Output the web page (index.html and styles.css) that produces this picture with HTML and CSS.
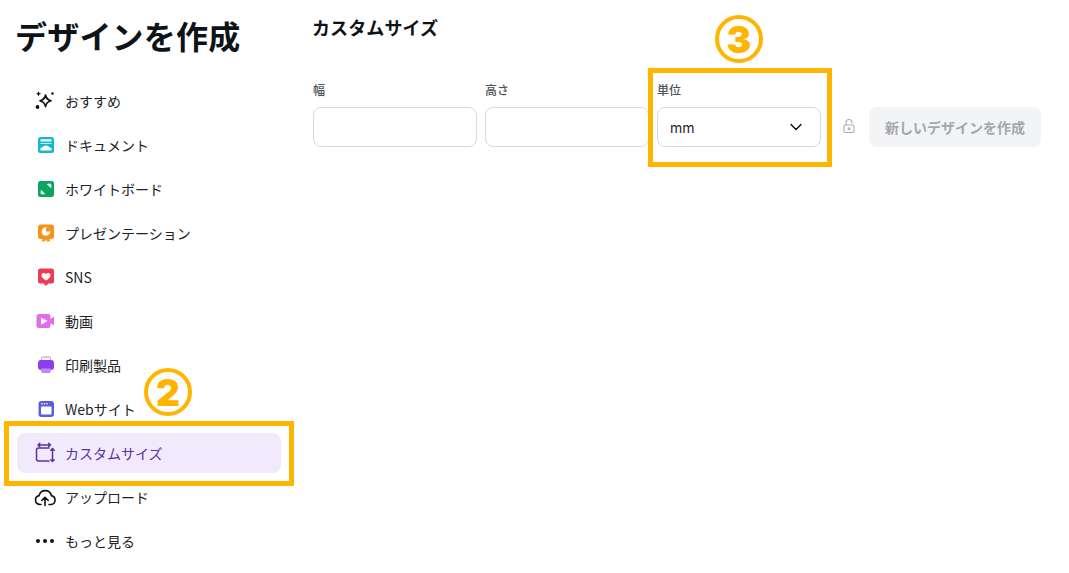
FILE: index.html
```html
<!DOCTYPE html>
<html lang="ja">
<head>
<meta charset="utf-8">
<title>デザインを作成</title>
<link rel="stylesheet" href="styles.css">
</head>
<body>
<div class="page">
  <aside class="sidebar">
    <h1 class="title">デザインを作成</h1>
    <nav class="menu">
      <a class="item"><svg class="icon" viewBox="0 0 24 24"><path d="M11.500 6c.6 3.300 2 4.900 5.500 5.800-3.500.9-4.900 2.500-5.500 5.800-.6-3.300-2-4.900-5.500-5.800 3.500-.9 4.900-2.500 5.500-5.800z" fill="none" stroke="#0e1318" stroke-width="1.700" stroke-linejoin="round"/><path d="M4.500 2l.8 2 2 .8-2 .8-.8 2-.8-2-2-.8 2-.8z" fill="#0e1318"/><circle cx="18.500" cy="4.500" r="1.300" fill="#0e1318"/><circle cx="3.500" cy="18" r="1.900" fill="#0e1318"/></svg><span>おすすめ</span></a>
      <a class="item"><svg class="icon" viewBox="0 0 24 24"><rect x="4" y="4" width="16" height="16" rx="2.500" fill="#14b8d0"/><rect x="6.500" y="6.300" width="11" height="2.200" fill="#fff"/><path d="M6.500 10h11v1h-11z" fill="#bfeef4"/><path d="M6.500 17.500v-2.500c2-.2 3-2.500 5.500-2.500s3.500 2.300 5.500 2.500v2.500z" fill="#fff"/></svg><span>ドキュメント</span></a>
      <a class="item"><svg class="icon" viewBox="0 0 24 24"><rect x="4" y="4" width="16" height="16" rx="2.500" fill="#0ba55f"/><path d="M13.500 7.200h3.300v3.300zM10.500 16.800H7.200v-3.300z" fill="#fff" stroke="#fff" stroke-width="1" stroke-linejoin="round"/></svg><span>ホワイトボード</span></a>
      <a class="item"><svg class="icon" viewBox="0 0 24 24"><path d="M9 17l-1.500 4 2.500-1 1 1 1-3zM15 17l1.500 4-2.500-1-1 1-1-3z" fill="#f7931a"/><rect x="4" y="3.500" width="16" height="14.500" rx="2.500" fill="#f7931a"/><circle cx="12" cy="10.500" r="4.300" fill="#fff"/><path d="M12 10.500V6.200a4.300 4.300 0 0 1 4.300 4.300z" fill="#f7931a"/></svg><span>プレゼンテーション</span></a>
      <a class="item"><svg class="icon" viewBox="0 0 24 24"><path d="M6.500 3.500h11A2.500 2.500 0 0 1 20 6v10a2.500 2.500 0 0 1-2.500 2.500h-3L12 21l-2.500-2.500h-3A2.500 2.500 0 0 1 4 16V6a2.500 2.500 0 0 1 2.500-2.500z" fill="#ee3a55"/><path d="M12 15.500c-3-2-4.500-3.500-4.500-5.300 0-2.500 3.200-3.200 4.500-1 1.300-2.200 4.500-1.500 4.500 1 0 1.800-1.500 3.300-4.500 5.300z" fill="#fff"/></svg><span>SNS</span></a>
      <a class="item"><svg class="icon" viewBox="0 0 24 24"><rect x="2.500" y="5" width="14" height="14" rx="2.500" fill="#e06ee8"/><path d="M15.500 10.500l4.500-3v9l-4.500-3z" fill="#e06ee8"/><path d="M7 8.500l6.500 3.600L7 15.800z" fill="#fff"/></svg><span>動画</span></a>
      <a class="item"><svg class="icon" viewBox="0 0 24 24"><path d="M7 8V5.500a2 2 0 0 1 2-2h6a2 2 0 0 1 2 2V8z" fill="#b184f3"/><rect x="7.800" y="4.500" width="8.400" height="3" fill="#fff"/><rect x="4" y="7" width="16" height="10" rx="3" fill="#8b3df0"/><path d="M7 15.500h10V18a2 2 0 0 1-2 2H9a2 2 0 0 1-2-2z" fill="#bd8df5"/></svg><span>印刷製品</span></a>
      <a class="item"><svg class="icon" viewBox="0 0 24 24"><rect x="4.500" y="4" width="15.500" height="16" rx="3" fill="#5a5fe0"/><rect x="7" y="9.500" width="10.500" height="8" rx="1" fill="#fff"/><circle cx="8" cy="6.800" r=".8" fill="#fff"/><circle cx="10.500" cy="6.800" r=".8" fill="#fff"/><circle cx="13" cy="6.800" r=".8" fill="#fff"/></svg><span>Webサイト</span></a>
      <a class="item active"><svg class="icon" viewBox="0 0 24 24" fill="none" stroke="#5a32a3" stroke-width="1.500" stroke-linecap="round" stroke-linejoin="round"><path d="M15 7H4.500A2 2 0 0 0 2.500 9v9a2 2 0 0 0 2 2H15"/><path d="M4 4h12.500M5.800 2.300L4 4l1.800 1.700M14.700 2.300L16.500 4l-1.800 1.700M18.500 7.500v13M16.800 9.200l1.700-1.700 1.700 1.700M16.800 18.800l1.700 1.700 1.700-1.700"/></svg><span>カスタムサイズ</span></a>
      <a class="item"><svg class="icon" viewBox="0 0 24 24" fill="none" stroke="#0e1318" stroke-width="1.600" stroke-linecap="round" stroke-linejoin="round"><path d="M7 19.500H6a4.500 4.500 0 0 1-.9-8.900 6.300 6.300 0 0 1 12.300 0 4.500 4.500 0 0 1-.4 8.900H15"/><path d="M11 20.500v-8M7.800 15.500l3.200-3.200 3.200 3.200"/></svg><span>アップロード</span></a>
      <a class="item"><svg class="icon" viewBox="0 0 24 24" fill="#0e1318"><circle cx="4" cy="12" r="2"/><circle cx="11" cy="12" r="2"/><circle cx="18" cy="12" r="2"/></svg><span>もっと見る</span></a>
    </nav>
  </aside>
  <main class="main">
    <h2 class="heading">カスタムサイズ</h2>
    <div class="form">
      <div class="field"><label class="label">幅</label><div class="box"></div></div>
      <div class="field"><label class="label">高さ</label><div class="box"></div></div>
      <div class="field"><label class="label">単位</label>
        <div class="box select"><span>mm</span><svg class="chevron" viewBox="0 0 16 16" fill="none" stroke="#0e1318" stroke-width="1.500" stroke-linecap="round" stroke-linejoin="round"><path d="M3 5.500l5 5 5-5"/></svg></div>
      </div>
      <svg class="lock" viewBox="0 0 16 16" fill="none" stroke="#a8acb2" stroke-width="1.100"><rect x="3" y="7" width="10" height="7.500" rx="1.500"/><path d="M5 7V4.500a3 3 0 0 1 6 0v1"/><circle cx="8" cy="10.700" r="1"/></svg>
      <button class="create" type="button" disabled>新しいデザインを作成</button>
    </div>
  </main>
  <div class="frame frame-nav"></div>
  <div class="frame frame-unit"></div>
  <div class="badge badge-two">2</div>
  <div class="badge badge-three">3</div>
</div>
</body>
</html>
```
FILE: styles.css
```css
* { box-sizing: border-box; }
html, body { margin: 0; background: #fff; }
body { font-family: "Noto Sans CJK JP", "Noto Sans", sans-serif; color: #0e1318; }
.page { position: relative; display: flex; width: 1069px; height: 573px; overflow: hidden; }
.sidebar { width: 313px; padding: 0 32px 0 17px; flex: none; }
.title { margin: 12px 0 0 -2px; font-size: 32px; line-height: 46px; font-weight: 700; letter-spacing: .2px; color: #0e1318; white-space: nowrap; }
.menu { display: flex; flex-direction: column; gap: 4px; margin-top: 23px; }
.item { display: flex; align-items: center; gap: 7px; height: 40px; padding-left: 17px; border-radius: 8px; font-size: 14px; color: #1d2328; white-space: nowrap; }
.item.active { background: #f1eafc; color: #5a32a3; }
.icon { width: 24px; height: 24px; flex: none; }
.main { flex: 1; min-width: 0; }
.heading { margin: 14px 0 0 -1px; font-size: 18px; line-height: 26px; font-weight: 700; letter-spacing: .1px; color: #0e1318; }
.form { display: flex; align-items: flex-end; gap: 8px; margin-top: 40px; }
.field { display: flex; flex-direction: column; width: 164px; }
.label { padding-top: 1px; font-size: 12px; line-height: 18px; font-weight: 500; color: #4c5159; margin-bottom: 8px; }
.box { height: 40px; border: 1px solid #d9dbdf; border-radius: 8px; background: #fff; }
.select { display: flex; align-items: center; justify-content: space-between; padding: 0 16px 0 12px; font-family: "Inter", sans-serif; font-size: 14px; color: #1d2328; }
.chevron { width: 16px; height: 16px; }
.lock { width: 16px; height: 16px; margin: 0 4px 13px 12px; flex: none; }
.create { width: 172px; height: 40px; padding: 0; border: 0; border-radius: 8px; background: #f3f4f6; color: #a3a7ad; font: 700 14px "Noto Sans CJK JP", sans-serif; }
.frame { position: absolute; border: 5px solid #ffb500; border-radius: 1px; pointer-events: none; }
.frame-nav { left: 4px; top: 421px; width: 290px; height: 65px; }
.frame-unit { left: 648px; top: 68px; width: 184px; height: 99px; }
.badge { position: absolute; display: flex; align-items: center; justify-content: center; width: 48px; height: 48px; border: 4px solid #ffb500; border-radius: 50%; color: #ffb500; font: 900 37px/1 "Inter", sans-serif; }
.badge-two { left: 144px; top: 368px; }
.badge-three { left: 715px; top: 15px; }
```
